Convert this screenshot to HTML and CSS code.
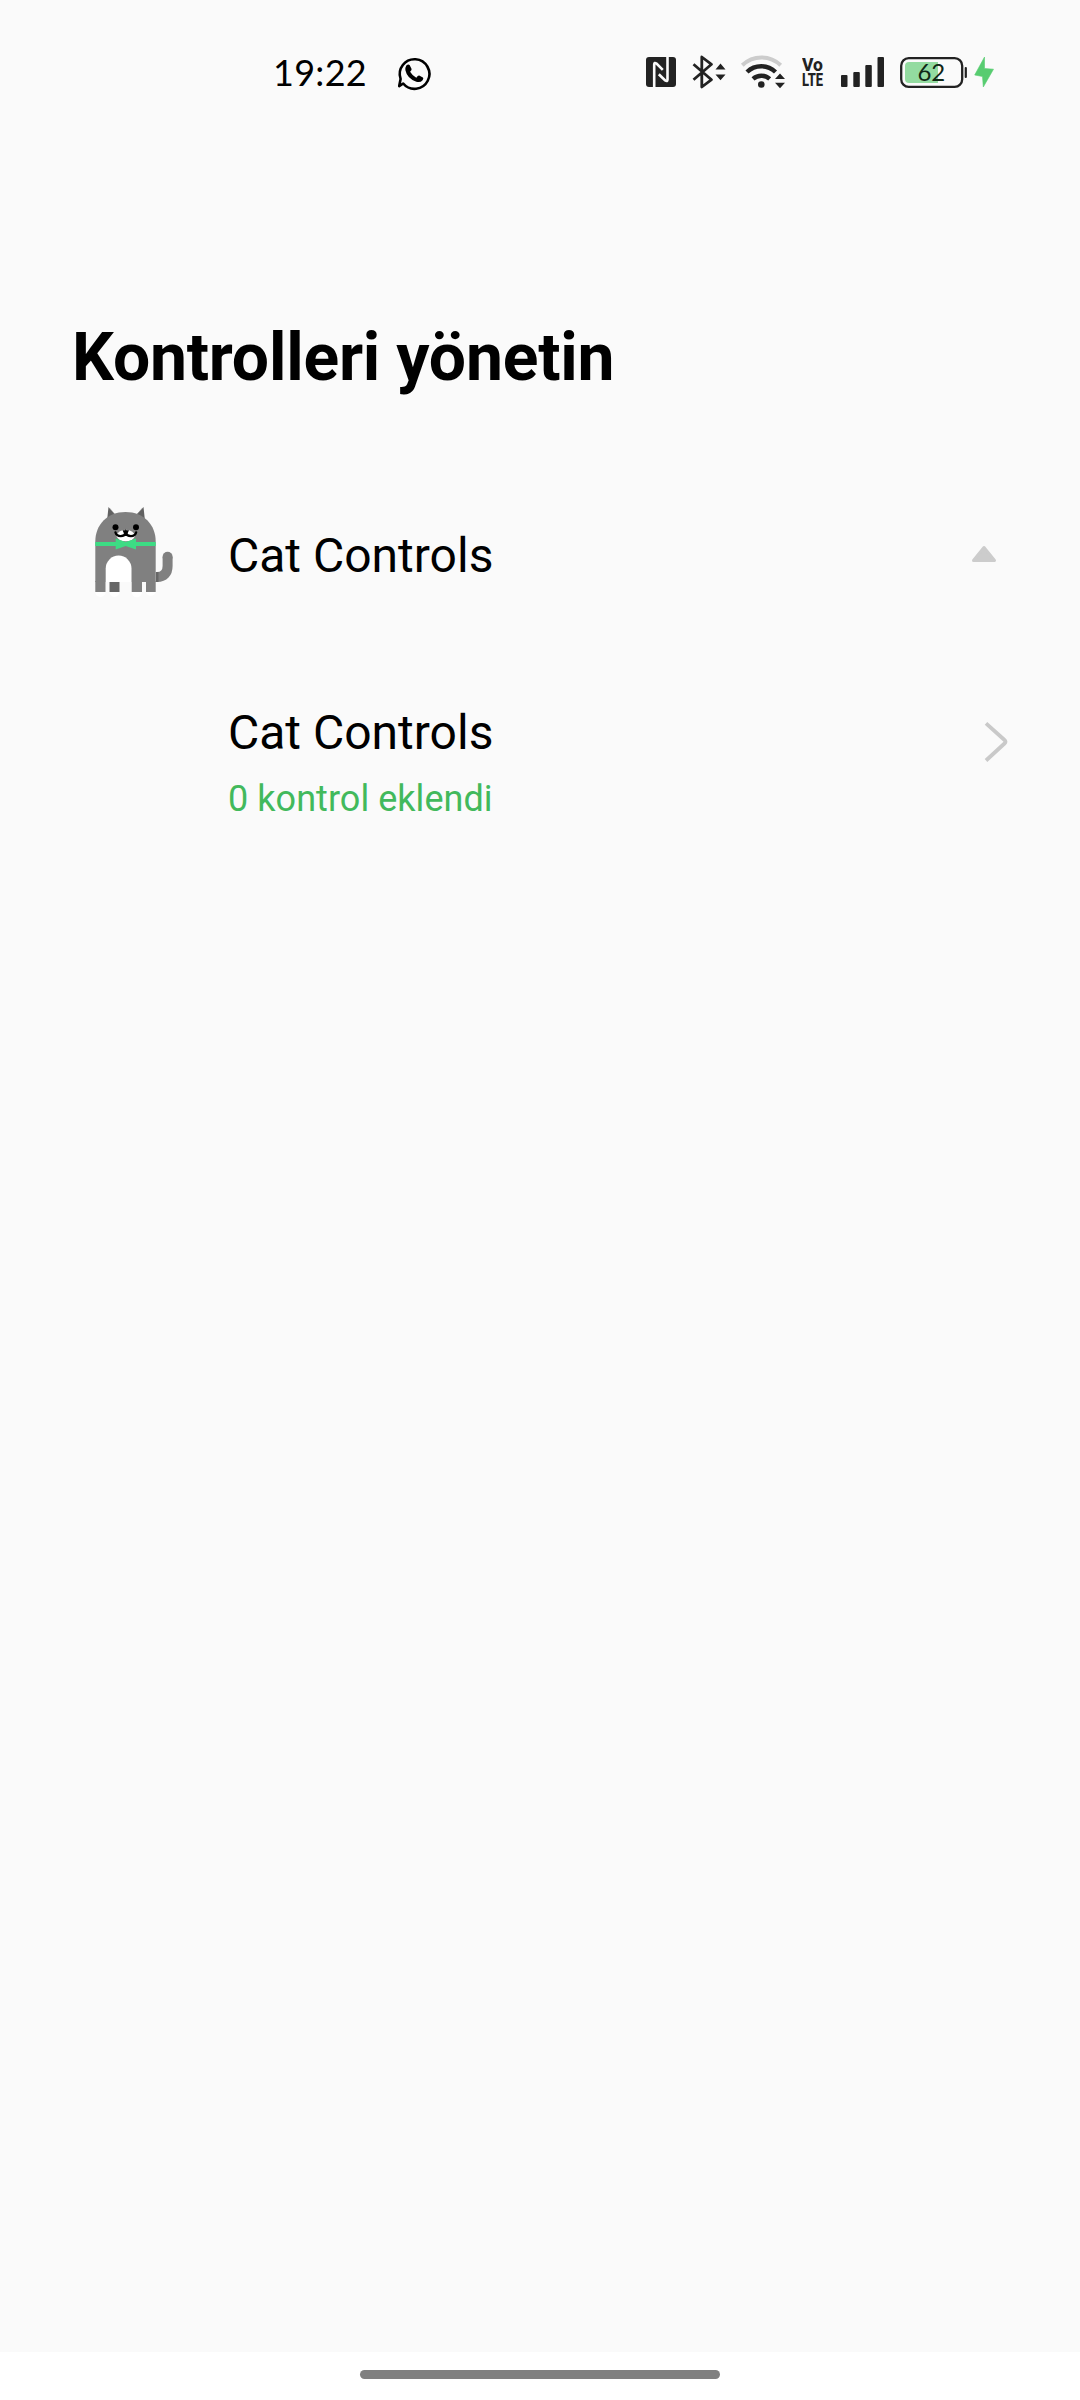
FILE: index.html
```html
<!DOCTYPE html>
<html lang="tr">
<head>
<meta charset="utf-8">
<title>Kontrolleri yönetin</title>
<link rel="stylesheet" href="styles.css">
</head>
<body>
<div class="screen">
  <header class="status">
    <div class="status-left">
      <span class="clock">19:22</span>
      <svg class="whatsapp" width="34" height="34" viewBox="397 56 34 34">
        <path d="M403.2 84.8A14.800 14.800 0 1 0 400.600 80.200L399.200 87.400Z" transform="translate(0 -.3)" fill="none" stroke="#000" stroke-width="2.6" stroke-linejoin="round"/>
        <path d="M406.3 66.6q1.8-2 3.3-.7l2 4q.3 1-1.5 2.8q2.5 4.200 6.200 6q1.900-2.500 2.900-2.100l3.700 1.900q1 .7-.3 2.700q-2.200 2.700-6.300 1.500q-9.200-3.300-10.900-11.500q-.2-2.800.9-4.600z"/>
      </svg>
    </div>
    <div class="status-right">
      <svg width="30" height="30" viewBox="646 57 30 30">
        <rect x="646" y="57" width="30" height="30" rx="3" fill="#222"/>
        <path d="M654.200 87V64.500Q654.200 62 656.500 63.500L662.800 69.800M667.500 57V79.500Q667.500 82 665.200 80.500L658.800 74.200" fill="none" stroke="#fafafa" stroke-width="2.600"/>
      </svg>
      <svg class="bluetooth" width="35" height="34" viewBox="692 55 35 34">
        <path d="M693.500 64.300L711.500 79.700L701.800 87V57L711.500 64.300L693.500 79.700" fill="none" stroke="#222" stroke-width="2.800" stroke-linejoin="round"/>
        <path d="M715.500 69.500L720.500 63.500L725.500 69.500ZM715.500 74.500H725.500L720.500 80.300Z" fill="#222"/>
      </svg>
      <svg class="wifi" width="45" height="35" viewBox="741 54 45 35">
        <path d="M742.300 65.200A27.500 27.500 0 0 1 780.700 65.200" fill="none" stroke="#ccc" stroke-width="4"/>
        <path d="M747 72A20.500 20.500 0 0 1 775.500 72M753 78.900A12.600 12.600 0 0 1 769.700 78.900" fill="none" stroke="#222" stroke-width="4.400"/>
        <circle cx="761.300" cy="84.500" r="3.300" fill="#222"/>
        <path d="M775 79L780 73.500L785 79ZM775 82.700H785L780 88.200Z" fill="#222"/>
      </svg>
      <div class="volte"><span class="vo">Vo</span><span class="lte">LTE</span></div>
      <svg class="signal" width="44" height="30" viewBox="841 57 44 30">
        <g fill="#222"><rect x="841" y="75" width="6.500" height="12" rx="1"/><rect x="853.300" y="72" width="6.500" height="15" rx="1"/><rect x="865.300" y="65" width="6.500" height="22" rx="1"/><rect x="877.500" y="57" width="6.500" height="30" rx="1"/></g>
      </svg>
      <svg class="battery" width="67" height="31" viewBox="900 57 67 31">
        <rect x="901.200" y="58.200" width="61" height="28.600" rx="7.500" fill="none" stroke="#222" stroke-width="2.300"/>
        <path d="M938 62V83H909a4 4 0 0 1-4-4V66a4 4 0 0 1 4-4Z" fill="#93dba0"/>
        <rect x="964.700" y="67" width="2.200" height="11" rx="1" fill="#222"/>
        <text x="917.400" y="81">62</text>
      </svg>
      <svg class="bolt" width="20" height="31" viewBox="974 57 20 31">
        <path d="M984.500 57V68.500L993.500 69.200L983.300 87L982.500 76.500L974.700 75Z" fill="#57cc70" stroke="#57cc70" stroke-width=".6" stroke-linejoin="round"/>
      </svg>
    </div>
  </header>

  <main>
    <h1>Kontrolleri yönetin</h1>
    <section class="row app">
      <svg class="cat" width="80" height="92" viewBox="94 506 80 92">
        <path d="M107 521L108.500 507L115.500 515ZM136 515L143.500 507L145 521Z" fill="#616161"/>
        <path d="M109.500 508L115.500 515M142.500 508L136.500 515" stroke="#999" stroke-width="1" opacity=".5"/>
        <path d="M95.300 582V541.500C95.300 525 107 512 125.500 512S155.700 525 155.700 541.500V582Z" fill="#808080"/>
        <path d="M95.300 581H105.500V592H95.300ZM131.700 581H142V592H131.700ZM146 581H155.700V592H146Z" fill="#808080"/>
        <rect x="109.500" y="582" width="10" height="10" fill="#666"/>
        <path d="M105.700 582V568.500a12.900 12.900 0 0 1 25.800 0V582Z" fill="#fff"/>
        <path d="M155.700 577H157C164 577 167.600 573 167.600 566V556.800" fill="none" stroke="#808080" stroke-width="10"/>
        <circle cx="167.600" cy="556.800" r="5" fill="#808080"/>
        <path d="M156 572H158.500V582H156Z" fill="#666"/>
        <path d="M95.300 592h10.200a5 5 0 0 1-10.200 0M109.500 592h10a5 5 0 0 1-10 0M131.700 592H142a5 5 0 0 1-10.300 0M146 592h9.700a5 5 0 0 1-9.700 0" fill="#fff"/>
        <path d="M116.500 536a9.300 7 0 0 1 18.500 0a9.500 6.800 0 0 1-18.500 0" fill="#fff"/>
        <circle cx="115.500" cy="527.300" r="3" /><circle cx="136" cy="527.300" r="3"/>
        <path d="M115.500 532.500c1.500 5 9 4.500 10.300.3c1.300 4.200 8.800 4.700 10.300-.3" fill="none" stroke="#000" stroke-width="2.400" stroke-linecap="round"/>
        <path d="M122.500 530.300h6.500l-1.500 3.200h-3.500Z"/>
        <path d="M95.300 542H155.700V546H95.300Z" fill="#3ddc84"/>
        <path d="M115.700 538.500L125.700 542L136 538.500V549.500L125.700 546L115.700 549.500Z" fill="#3ddc84"/>
      </svg>
      <span class="name">Cat Controls</span>
      <svg class="toggle" width="24" height="17" viewBox="972 546 24 17">
        <path d="M973.500 560.500L984 547.500L994.500 560.500Z" fill="#ccc" stroke="#ccc" stroke-width="3" stroke-linejoin="round"/>
      </svg>
    </section>
    <section class="row structure">
      <div class="labels">
        <span class="name">Cat Controls</span>
        <span class="count">0 kontrol eklendi</span>
      </div>
      <svg width="24" height="41" viewBox="984.500 721 24 41">
        <path d="M986.500 723.300L1005 740Q1007 741.700 1005 743.500L986.500 760.500" fill="none" stroke="#c9c9c9" stroke-width="3.800"/>
      </svg>
    </section>
  </main>
  <footer class="nav"><div class="handle"></div></footer>
</div>
</body>
</html>
```
FILE: styles.css
```css
body {
  margin: 0;
  background: #fafafa;
  color: #000;
  font-family: Roboto, sans-serif;
}

svg {
  display: block;
  flex: none;
  overflow: visible;
}

.screen {
  display: flex;
  flex-direction: column;
  width: 1080px;
  height: 2400px;
}

.status {
  display: flex;
  justify-content: space-between;
  height: 144px;
  box-sizing: border-box;
  padding: 50px 86px 0 273px;
}

.status-left,
.status-right {
  display: flex;
  align-items: center;
  height: 44px;
}

.clock {
  width: 124px;
  font: 36px/44px Lato, sans-serif;
  letter-spacing: 0.3px;
}

.bluetooth { margin-left: 16px; }
.wifi { margin: -1px 0 0 14px; }
.signal { margin-left: 17px; }
.battery { margin: 1px 0 0 15px; }
.bolt { margin: 1px 0 0 7px; }
.whatsapp { margin-top: 0; }

.volte {
  display: flex;
  flex-direction: column;
  width: 22px;
  margin-left: 16px;
  color: #222;
  font-size: 19px;
  font-weight: 800;
  line-height: 15.5px;
}

.vo,
.lte {
  width: max-content;
  transform-origin: left center;
}

.vo { transform: scaleX(0.92); }
.lte { transform: scaleX(0.68); }

.battery text {
  font: 24px Lato, sans-serif;
  fill: #102816;
}

main {
  flex: 1;
  padding: 175px 72px 0;
}

h1 {
  margin: 0;
  font-size: 66px;
  line-height: 78px;
  font-weight: 700;
  letter-spacing: -0.2px;
}

.row {
  display: flex;
}

.app {
  align-items: center;
  height: 92px;
  margin-top: 109px;
  padding: 0 12px 0 22px;
}

.cat {
  margin-right: 54px;
}

.name {
  font-size: 48px;
  line-height: 56px;
}

.app .name {
  flex: 1;
  padding-top: 8px;
}

.toggle {
  margin-top: 5px;
}

.structure {
  justify-content: space-between;
  margin-top: 107px;
  padding-left: 156px;
}

.structure svg {
  margin-top: 16px;
}

.labels {
  display: flex;
  flex-direction: column;
  gap: 17px;
}

.count {
  font-size: 36px;
  line-height: 42px;
  letter-spacing: 0.05px;
  color: #42b95c;
}

.nav {
  display: flex;
  justify-content: center;
  height: 48px;
  box-sizing: border-box;
  padding-top: 18px;
  background: #fff;
}

.handle {
  width: 360px;
  height: 9px;
  border-radius: 5px;
  background: #808080;
}
```
